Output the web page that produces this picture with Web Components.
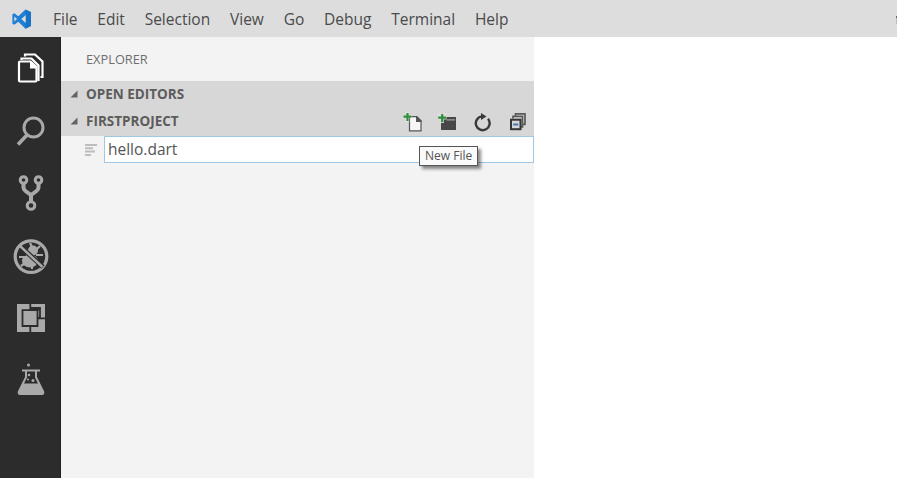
<!DOCTYPE html>
<html><head><meta charset="utf-8"><style>
html,body{margin:0;height:100%;overflow:hidden}
body{font-family:"Open Sans","Noto Sans",sans-serif}
</style></head><body>
<vs-window>
  <vs-menubar></vs-menubar>
  <vs-activitybar></vs-activitybar>
  <vs-explorer></vs-explorer>
</vs-window>
<script>
class VsWindow extends HTMLElement{constructor(){super();this.attachShadow({mode:'open'}).innerHTML=`<style>
:host{display:grid;grid-template-columns:61px 473px 1fr;grid-template-rows:37px 1fr;width:897px;height:478px;background:#fff}
::slotted(vs-menubar){grid-column:1/4}
</style><slot></slot>`}}
class VsMenubar extends HTMLElement{constructor(){super();
const items=['File','Edit','Selection','View','Go','Debug','Terminal','Help'];
this.attachShadow({mode:'open'}).innerHTML=`<style>
:host{display:flex;align-items:center;background:#dddddd;color:#4a4a4a;font-size:15.5px;position:relative}
svg{margin-left:12px;margin-right:21px;flex:none}
span{margin-right:19.8px;line-height:36px}
i{position:absolute;right:0;top:16px;width:1px;height:8px;background:linear-gradient(#666 25%,#bbb 25%)}
</style><svg width="20" height="20" viewBox="0 0 20 20"><path fill="#1f7fd6" d="M13.500.6 19 3v14l-5.500 2.800L6.300 12.800 2.300 15.700.4 14.800V5.200l1.900-.9 4 3zM13.800 6l-4.500 4 4.500 4z"/><path fill="#dddddd" d="M2.300 7.400v5.200L5 10z"/><path fill="#0f67b8" d="M13.500.6v5.100l.3.300V14l-.3.300v5.500L19 17V3z" opacity=".5"/></svg>
${items.map(t=>`<span>${t}</span>`).join('')}<i></i>`}}
class VsActivitybar extends HTMLElement{constructor(){super();
this.attachShadow({mode:'open'}).innerHTML=`<style>
:host{display:flex;flex-direction:column;align-items:center;background:#2c2c2c;box-shadow:inset -1px 0 0 #222}
div{height:62.4px;width:100%;display:flex;align-items:center;justify-content:center;flex:none}
</style>
<div><svg width="28" height="32" viewBox="0 0 28 32" fill="none" stroke="#fff" stroke-width="2.200">
<path d="M8 4.500V2.500h10l7.500 7V25h-2"/><path d="M4.500 8V6.500h10l7 7V29"/>
<path fill="#2c2c2c" d="M2 10.500a1 1 0 0 1 1-1h10.500L19.500 15v13.500a1 1 0 0 1-1 1H3a1 1 0 0 1-1-1z"/>
<path fill="#fff" stroke="none" d="M13 9.500h1.500l5.500 5.500v1.500h-7z"/></svg></div>
<div><svg width="32" height="32" viewBox="0 0 32 32" fill="none" stroke="#a9a9a9" stroke-width="3"><circle cx="18.500" cy="12.500" r="9.500"/><path stroke-width="3.600" d="M12 20 3 29.500"/></svg></div>
<div><svg width="26" height="36" viewBox="0 0 26 36" fill="none" stroke="#a9a9a9" stroke-width="3"><circle cx="5.500" cy="5" r="3.300"/><circle cx="20.500" cy="5" r="3.300"/><circle cx="13" cy="30.500" r="3.800"/><path stroke-width="4" d="M5.500 9v3.500q0 2 2 3.500l5.500 4 5.500-4q2-1.500 2-3.500V9M13 20v6"/></svg></div>
<div><svg width="36" height="38" viewBox="0 0 36 38" fill="none" stroke="#a9a9a9"><circle cx="18" cy="20.600" r="15.800" stroke-width="3.200"/><ellipse cx="17" cy="25" rx="8" ry="6.500" fill="#a9a9a9" stroke="none"/><circle cx="20" cy="14.500" r="5" fill="#a9a9a9" stroke="none"/><path stroke-width="2.200" d="M17 7l2 4M27 10l-4 4M30 19h-7M6 21h7M8 30l4-3M27 29l-3-3M19 33v-4"/><path stroke="#2c2c2c" stroke-width="4.800" d="M8 11l22 20"/><path stroke-width="2.400" d="M6.500 9.500l23 21.500"/></svg></div>
<div><svg width="28" height="28" viewBox="0 0 28 28"><rect width="28" height="28" fill="#a9a9a9"/><path fill="none" stroke="#2c2c2c" stroke-width="1.800" d="M13.300 0V5.800M13.300 22.500V28M5.500 6.200H20.500V22H5.500zM13.800 3.800H23V13.800H20.500M20.500 14.300H28"/><path fill="#2c2c2c" d="M13 3h10v3.500H13z"/></svg></div>
<div><svg width="28" height="34" viewBox="0 0 28 34" fill="none"><circle cx="11.500" cy="2" r="1.500" fill="#a9a9a9"/><path stroke="#a9a9a9" stroke-width="2" d="M5 7.500h18"/><path fill="#a9a9a9" d="M8 8h12v6l7 14q1.200 4-2 4H3q-3.200 0-2-4l7-14z"/><path fill="#2c2c2c" d="M10 8.500h8v6l3 6H7l3-6z"/><circle cx="12" cy="12" r="1.300" fill="#a9a9a9"/><circle cx="16" cy="17.500" r="1.500" fill="#a9a9a9"/><circle cx="11" cy="16.500" r="1" fill="#a9a9a9"/></svg></div>`}}
class VsSection extends HTMLElement{constructor(){super();
this.attachShadow({mode:'open'}).innerHTML=`<style>
:host{display:flex;align-items:center;height:27px;box-sizing:border-box;padding-bottom:2px;background:#d7d7d7;color:#5c5c5c;font-weight:700;font-size:13.5px;position:relative}
svg.tw{margin-left:9px;margin-right:8px;flex:none}
.grow{flex:1}
slot[name=actions]{display:flex}
</style><svg class="tw" width="8" height="8" viewBox="0 0 8 8"><path fill="#646464" d="M7.500.5v7H.5z"/></svg><slot></slot><span class="grow"></span><slot name="actions"></slot>`}}
class VsExplorer extends HTMLElement{constructor(){super();
this.attachShadow({mode:'open'}).innerHTML=`<style>
:host{display:block;background:#f3f3f3;color:#6f6f6f;position:relative}
.title{height:44px;display:flex;align-items:center;padding-left:25px;font-size:12.8px;color:#6f6f6f}
.row{display:flex;align-items:center;height:27px}
.row svg{margin-left:24px;margin-right:7px;flex:none}
.acts{display:flex;gap:15px;padding-right:6px;margin-top:2px;align-items:center}
.acts svg{display:block;flex:none;width:20px;height:20px}
vs-tooltip{position:absolute;left:358px;top:109px}
</style>
<div class="title">EXPLORER</div>
<vs-section>OPEN EDITORS</vs-section>
<vs-section style="height:28px">FIRSTPROJECT
<div class="acts" slot="actions">
<svg viewBox="0 0 20 20"><path fill="#f6f6f6" stroke="#555" stroke-width="1.200" d="M6.500 4.600h7l4.500 4.500v9.800H6.500z"/><path fill="#555" d="M13 4h1l4.500 4.500V10H13z"/><path fill="#e4e4e4" d="M2.800 0h3.400v2.800H9v3.400H6.200V10H2.800V6.200H0V2.800h2.800z" opacity=".85"/><path fill="#2f8f3a" d="M3.400 1h2.200v2.500H8.500v2.200H5.600V9H3.400V5.700H.5V3.500h2.900z"/></svg>
<svg viewBox="0 0 20 20"><path fill="#474747" d="M3 6h5l1-1h9v13H3z"/><path fill="#a5a5a5" d="M8.500 7.300H17v1.200H8.500z"/><path fill="#e0e0e0" d="M0 1h8.500v6.500H6V11H2.500V7.500H0z" opacity=".85"/><path fill="#2f8f3a" d="M3.100 2h2.200v2.500h2.900v2.200H5.300V10H3.100V6.700H.2V4.500h2.900z"/></svg>
<svg viewBox="0 0 20 20"><path fill="none" stroke="#3a3a3a" stroke-width="2.400" d="M9 4.400A6.900 6.900 0 1 0 15 6.800"/><path fill="#3a3a3a" d="M8 1l5.500 3.500L8 8z"/></svg>
<svg viewBox="0 0 20 20"><path fill="none" stroke="#5a5a5a" stroke-width="1.700" d="M7.500 4V1.900H17v10.500H15M5 6.500V4.400H14.500V15H13"/><rect x="3" y="7.700" width="9.500" height="9.500" fill="#d7d7d7" stroke="#363636" stroke-width="2"/><path stroke="#3f78b0" stroke-width="2" d="M5.200 12.500h5"/></svg>
</div></vs-section>
<div class="row"><svg width="12" height="12" viewBox="0 0 12 12" fill="#bdbdbd"><path d="M0 0h12v2H0zM0 3.300h8v2H0zM0 6.600h10v2H0zM0 9.900h6v2H0z"/></svg><vs-input>hello.dart</vs-input></div>
<vs-tooltip>New File</vs-tooltip>`}}
class VsInput extends HTMLElement{constructor(){super();
this.attachShadow({mode:'open'}).innerHTML=`<style>
:host{display:flex;align-items:center;flex:1;background:#fff;border:1px solid #9fc8e4;padding:0 0 2px 3px;box-sizing:content-box;height:23px;font-size:15.5px;color:#555}
</style><slot></slot>`}}
class VsTooltip extends HTMLElement{constructor(){super();
this.attachShadow({mode:'open'}).innerHTML=`<style>
:host{display:block;background:#fafafa;border:1px solid #555;color:#555;font-size:12px;padding:0 5px;line-height:18px;box-shadow:3px 3px 3px rgba(0,0,0,.45)}
</style><slot></slot>`}}
for(const [n,c] of Object.entries({'vs-window':VsWindow,'vs-menubar':VsMenubar,'vs-activitybar':VsActivitybar,'vs-section':VsSection,'vs-explorer':VsExplorer,'vs-input':VsInput,'vs-tooltip':VsTooltip}))customElements.define(n,c);
</script></body></html>
